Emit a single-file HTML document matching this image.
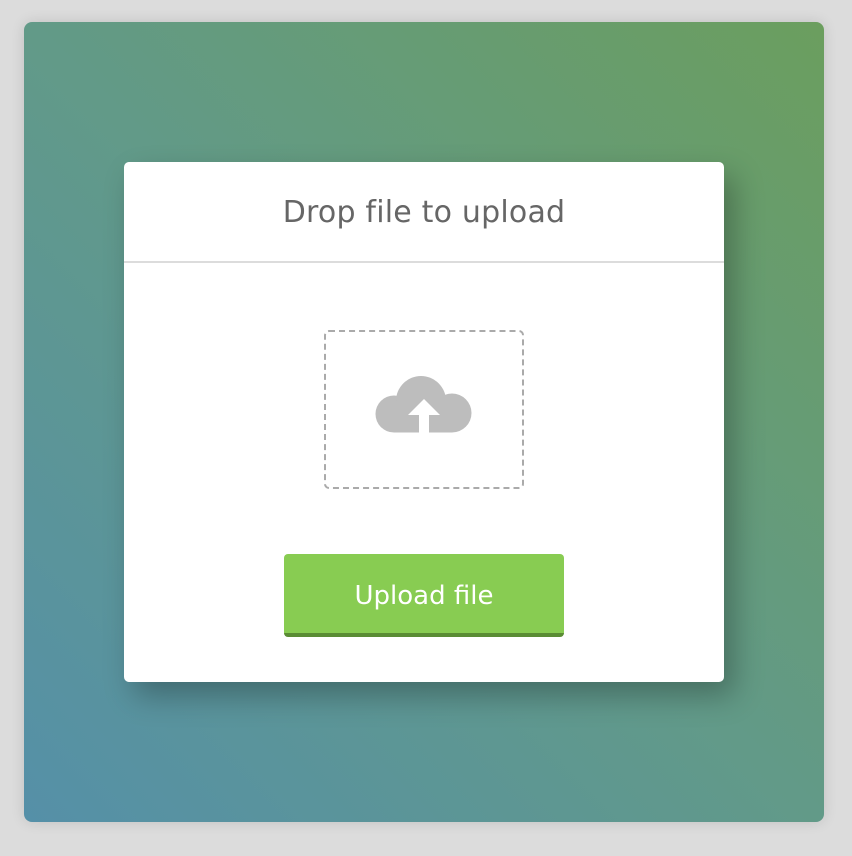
<!DOCTYPE html>
<html><head><meta charset="utf-8"><style>
html,body{margin:0;padding:0;width:852px;height:856px;background:#dcdcdc;overflow:hidden}
.bg{position:absolute;left:24px;top:22px;width:800px;height:800px;border-radius:8px;
background:linear-gradient(to top right,#5590a8 0%,#629a88 50%,#6b9e5e 100%);box-shadow:0 0 14px rgba(0,0,0,.12)}
.card{position:absolute;left:124px;top:162px;width:600px;height:520px;background:#fff;border-radius:5px;
box-shadow:10px 14px 30px rgba(0,0,0,.28)}
.title{height:101px;border-bottom:2px solid #dcdcdc;box-sizing:border-box;text-align:center;line-height:102px;
font-family:"DejaVu Sans","Liberation Sans",sans-serif;font-size:30px;color:#666;font-weight:normal;letter-spacing:0.2px}
.drop{position:absolute;left:200px;top:168px;width:200px;height:159px;box-sizing:border-box;border:2px dashed #aaa;border-radius:5px}
.btn{position:absolute;left:160px;top:392px;width:280px;height:83px;background:#88cc52;border-radius:4px;
border-bottom:4px solid #5a8c34;box-sizing:border-box;text-align:center;line-height:84px;color:#fff;
font-family:"DejaVu Sans","Liberation Sans",sans-serif;font-size:26px}
</style></head><body>
<div class="bg"></div>
<div class="card">
<div class="title">Drop file to upload</div>
<div class="drop"></div>
<svg style="position:absolute;left:0;top:0" width="600" height="520" viewBox="124 162 600 520">
<g fill="#bdbdbd">
<circle cx="394" cy="414" r="18.5"/>
<circle cx="421" cy="401" r="25"/>
<circle cx="452" cy="413" r="19.5"/>
<rect x="394" y="404" width="58" height="28.5"/>
</g>
<path fill="#fff" d="M424 399 L440 415 L429 415 L429 433 L419 433 L419 415 L408 415 Z"/>
</svg>
<div class="btn">Upload file</div>
</div>
</body></html>
